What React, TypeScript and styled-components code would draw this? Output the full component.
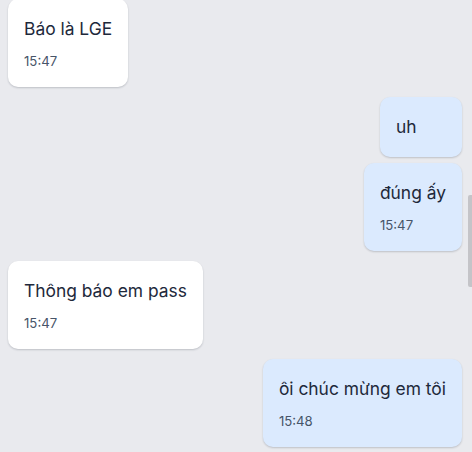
import * as React from 'react';
import styled, { createGlobalStyle } from 'styled-components';

type Message = {
  text: string;
  time?: string;
  mine?: boolean;
};

const messages: Message[] = [
  { text: 'Báo là LGE', time: '15:47' },
  { text: 'uh', mine: true },
  { text: 'đúng ấy', time: '15:47', mine: true },
  { text: 'Thông báo em pass', time: '15:47' },
  { text: 'ôi chúc mừng em tôi', time: '15:48', mine: true }
];

const Global = createGlobalStyle({
  'html, body': {
    margin: 0,
    padding: 0,
    background: '#e9eaee',
    fontFamily: 'Inter, "Noto Sans", sans-serif'
  }
});

const Screen = styled.div({
  position: 'relative',
  width: 472,
  height: 452,
  overflow: 'hidden',
  background: '#e9eaee'
});

const List = styled.div({
  display: 'flex',
  flexDirection: 'column',
  padding: '0 10px 0 8px',
  marginTop: -1
});

const Row = styled.div<{ mine?: boolean; gap: number }>(({ mine, gap }) => ({
  display: 'flex',
  justifyContent: mine ? 'flex-end' : 'flex-start',
  marginTop: gap
}));

const Bubble = styled.div<{ mine?: boolean }>(({ mine }) => ({
  minWidth: 50,
  padding: 16,
  borderRadius: 10,
  background: mine ? '#dbeafe' : '#ffffff',
  boxShadow: '0 1px 2px rgba(15, 23, 42, 0.2)',
  color: '#1e293b'
}));

const Text = styled.div({
  fontSize: 17.4,
  lineHeight: '28px',
  whiteSpace: 'nowrap'
});

const Time = styled.div({
  marginTop: 8,
  fontSize: 13.2,
  lineHeight: '20px',
  color: '#475569'
});

const Thumb = styled.div({
  position: 'absolute',
  right: 0,
  top: 195,
  width: 4,
  height: 92,
  background: '#c4c4c8',
  borderRadius: '2px 0 0 2px'
});

export default function App() {
  return (
    <>
      <Global />
      <Screen>
        <List>
          {messages.map((m, i) => {
            const prev = messages[i - 1];
            const gap = i === 0 ? 0 : prev.mine === m.mine ? 6 : 10;
            return (
              <Row key={i} mine={m.mine} gap={gap}>
                <Bubble mine={m.mine}>
                  <Text>{m.text}</Text>
                  {m.time && <Time>{m.time}</Time>}
                </Bubble>
              </Row>
            );
          })}
        </List>
        <Thumb />
      </Screen>
    </>
  );
}
